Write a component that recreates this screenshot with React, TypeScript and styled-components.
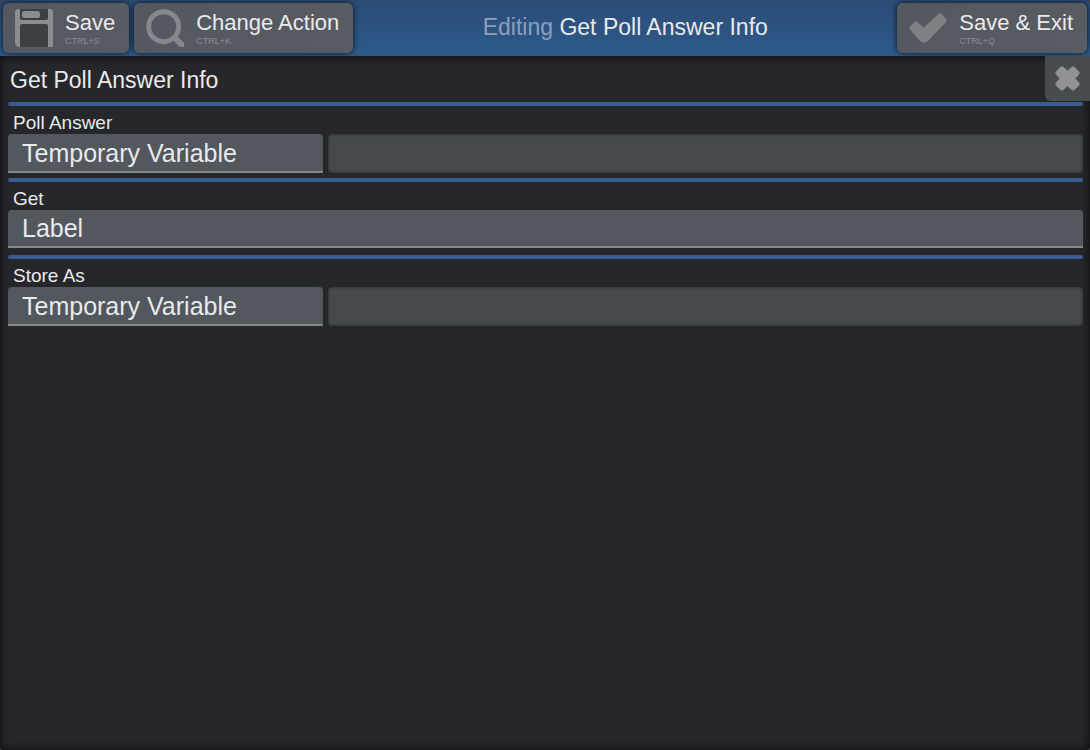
import React from 'react';
import styled, { createGlobalStyle } from 'styled-components';

const GlobalStyle = createGlobalStyle`
  * { box-sizing: border-box; }
  html, body, #root { height: 100%; }
  body {
    margin: 0;
    background: #3c3d40;
    color: #e9eaeb;
    font-family: "Liberation Sans", Arial, sans-serif;
  }
  button, input, select { font-family: inherit; color: inherit; margin: 0; }
`;

const Shell = styled.div`
  display: flex;
  flex-direction: column;
  min-height: 100%;
  border-radius: 4px;
  overflow: hidden;
`;

const Toolbar = styled.header`
  display: grid;
  grid-template-columns: auto 1fr auto;
  align-items: center;
  height: 56px;
  padding: 0 3px;
  background: linear-gradient(#2d4c77, #2c5a8b);
`;

const ToolGroup = styled.div`
  display: flex;
  gap: 5px;
`;

const ToolButton = styled.button`
  display: flex;
  align-items: center;
  gap: 12px;
  height: 50px;
  padding: 0 14px 0 12px;
  border: 0;
  border-radius: 6px;
  background: linear-gradient(120deg, #53585f, #595c62);
  box-shadow: 0 0 6px rgba(0, 0, 0, 0.8);
  text-align: left;
  cursor: pointer;
  svg { display: block; flex: none; }
`;

const ToolText = styled.span`
  display: flex;
  flex-direction: column;
  font-size: 22px;
  line-height: 26px;
  white-space: nowrap;
`;

const Shortcut = styled.small`
  font-size: 9px;
  line-height: 11px;
  color: #898c91;
`;

const Heading = styled.h1`
  margin: 0;
  padding-bottom: 2px;
  font-size: 23px;
  line-height: 28px;
  font-weight: 400;
  text-align: center;
  white-space: nowrap;
  span { color: #8ba0bb; }
`;

const Panel = styled.main`
  flex: 1;
  background: #25272b;
  box-shadow: inset 0 0 8px #08080a;
`;

const PanelTop = styled.div`
  display: flex;
  justify-content: space-between;
  align-items: flex-start;
  height: 46px;
  padding-left: 10px;
`;

const PanelTitle = styled.h2`
  margin: 0;
  font-size: 23px;
  line-height: 48px;
  font-weight: 400;
`;

const CloseButton = styled.button`
  display: grid;
  place-items: center;
  width: 45px;
  height: 45px;
  padding: 0;
  border: 0;
  border-radius: 0 0 0 6px;
  background: #484b50;
  cursor: pointer;
`;

const Fields = styled.form`
  padding: 0 7px 0 8px;
`;

const Divider = styled.hr`
  height: 4px;
  margin: 0;
  border: 0;
  border-radius: 2px;
  background: #3a5c91;
`;

const Field = styled.div<{ $single?: boolean }>`
  padding-bottom: ${(p) => (p.$single ? 7 : 5)}px;
`;

const Label = styled.label`
  display: block;
  height: 28px;
  padding-left: 5px;
  font-size: 19px;
  line-height: 34px;
`;

const Controls = styled.div<{ $single?: boolean }>`
  display: grid;
  grid-template-columns: ${(p) => (p.$single ? '1fr' : '5fr 12fr')};
  gap: 5px;
  height: ${(p) => (p.$single ? 38 : 39)}px;
`;

const Select = styled.select`
  appearance: none;
  width: 100%;
  height: 100%;
  padding: 0 14px;
  border: 0;
  border-bottom: 2px solid #84878b;
  border-radius: 4px 4px 0 0;
  background: #53575e;
  font-size: 25px;
  line-height: 36px;
`;

const TextBox = styled.input`
  width: 100%;
  height: 100%;
  padding: 0 14px;
  border: 0;
  border-radius: 4px;
  background: #46494d;
  box-shadow: inset 0 0 3px rgba(0, 0, 0, 0.5);
  font-size: 25px;
`;

const SaveIcon = () => (
  <svg width="38" height="38" viewBox="0 0 38 38" aria-hidden="true">
    <path d="M3 0H35Q38 0 38 3V38H3L0 35V3Q0 0 3 0Z" fill="#8a8d92" />
    <path d="M5 0H33V9Q33 11 31 11H7Q5 11 5 9Z" fill="#3c3f44" />
    <rect x="7" y="2" width="18" height="7" rx="2.5" fill="#8a8d92" />
    <path d="M5 38V17Q5 15 7 15H31Q33 15 33 17V38Z" fill="#3c3f44" />
  </svg>
);

const SearchIcon = () => (
  <svg width="38" height="38" viewBox="0 0 38 38" aria-hidden="true">
    <g fill="none" stroke="#85888d" strokeWidth="5">
      <circle cx="17.7" cy="17.7" r="15" />
      <path d="M27.500 27.500L42 42" strokeWidth="6" />
    </g>
  </svg>
);

const CheckIcon = () => (
  <svg width="38" height="38" viewBox="0 0 38 38" aria-hidden="true">
    <path
      d="M3 19L7 15L14.500 22L31 7L35 11.500L17.500 30Q15 32 12.500 30Z"
      fill="#7e8185"
      stroke="#7e8185"
      strokeWidth="5"
      strokeLinejoin="round"
    />
  </svg>
);

const CloseIcon = () => (
  <svg width="26" height="26" viewBox="0 0 26 26" aria-hidden="true">
    <path
      d="M7 3L12.500 8L18 3L22 7L17 12.500L22 18L18 22L12.500 17L7 22L3 18L8 12.500L3 7Z"
      fill="#919295"
      stroke="#919295"
      strokeWidth="5"
      strokeLinejoin="round"
    />
  </svg>
);

type ToolProps = { icon: React.ReactNode; label: string; keys: string };

const Tool = ({ icon, label, keys }: ToolProps) => (
  <ToolButton type="button">
    {icon}
    <ToolText>
      {label}
      <Shortcut>{keys}</Shortcut>
    </ToolText>
  </ToolButton>
);

type FieldRowProps = { id: string; label: string; option: string; single?: boolean };

const FieldRow = ({ id, label, option, single }: FieldRowProps) => (
  <>
    <Divider />
    <Field $single={single}>
      <Label htmlFor={id}>{label}</Label>
      <Controls $single={single}>
        <Select id={id} defaultValue={option}>
          <option>{option}</option>
        </Select>
        {!single && <TextBox type="text" aria-label={`${label} name`} />}
      </Controls>
    </Field>
  </>
);

export default function App() {
  return (
    <>
      <GlobalStyle />
      <Shell>
        <Toolbar>
          <ToolGroup>
            <Tool icon={<SaveIcon />} label="Save" keys="CTRL+S" />
            <Tool icon={<SearchIcon />} label="Change Action" keys="CTRL+K" />
          </ToolGroup>
          <Heading>
            <span>Editing</span> Get Poll Answer Info
          </Heading>
          <ToolGroup>
            <Tool icon={<CheckIcon />} label="Save & Exit" keys="CTRL+Q" />
          </ToolGroup>
        </Toolbar>
        <Panel>
          <PanelTop>
            <PanelTitle>Get Poll Answer Info</PanelTitle>
            <CloseButton type="button" aria-label="Close">
              <CloseIcon />
            </CloseButton>
          </PanelTop>
          <Fields>
            <FieldRow id="poll-answer" label="Poll Answer" option="Temporary Variable" />
            <FieldRow id="get" label="Get" option="Label" single />
            <FieldRow id="store-as" label="Store As" option="Temporary Variable" />
          </Fields>
        </Panel>
      </Shell>
    </>
  );
}
